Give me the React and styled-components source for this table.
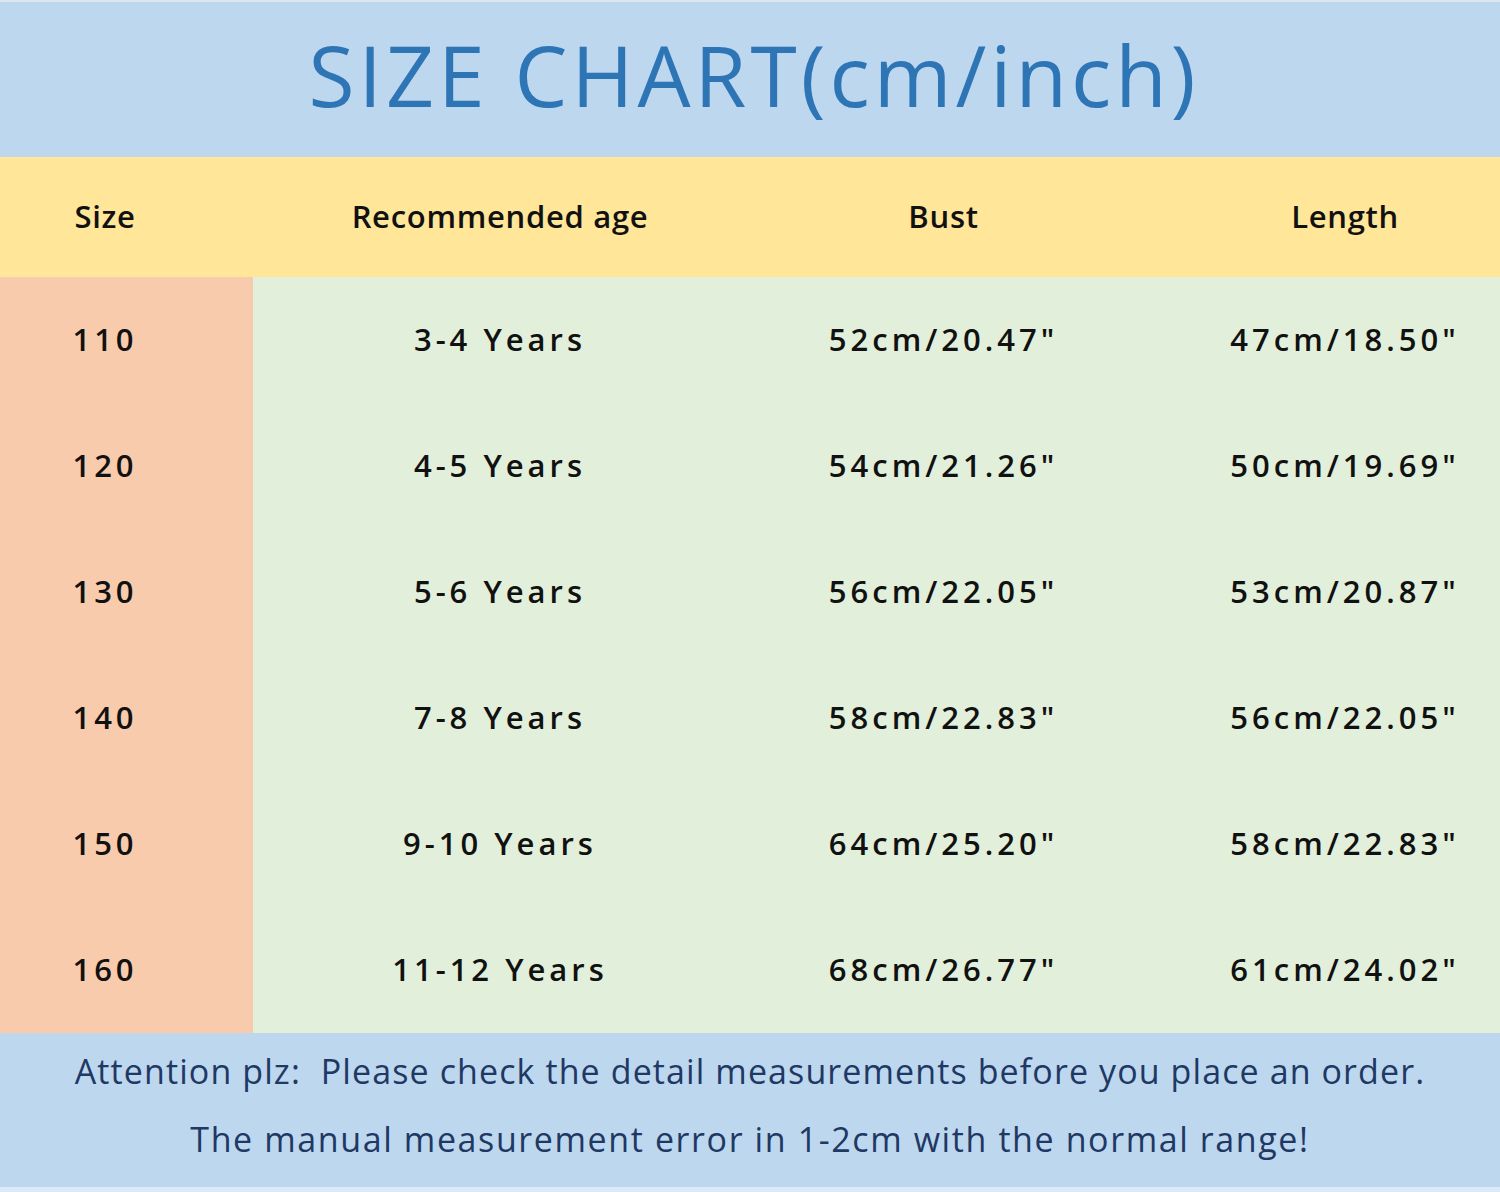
import React from 'react';
import styled, { createGlobalStyle } from 'styled-components';

/* Styling */
const GlobalStyle = createGlobalStyle`
  html, body {
    margin: 0;
    padding: 0;
    background: #dfe7ef;
  }
  body {
    font-family: "Open Sans", "DejaVu Sans", sans-serif;
  }
`;

const Sheet = styled.div`
  width: 1500px;
  height: 1192px;
  display: flex;
  flex-direction: column;
  border-top: 2px solid #dde5ee;
  border-bottom: 5px solid #dce9f6;
  box-sizing: border-box;
  overflow: hidden;
`;

const TitleBand = styled.div`
  height: 155px;
  background-color: #bdd7ee;
  display: flex;
  align-items: center;
  justify-content: center;
  box-sizing: border-box;
  padding-bottom: 10px;
  padding-left: 8px;
`;

const Title = styled.h1`
  margin: 0;
  font-family: "Open Sans", sans-serif;
  font-weight: 400;
  font-size: 84px;
  letter-spacing: 4px;
  color: #2e75b6;
  line-height: 1;
`;

const Grid = styled.div`
  display: grid;
  grid-template-columns: 253px 494px 393px 360px;
  grid-template-rows: 120px repeat(6, 126px);
`;

const Cell = styled.div`
  display: flex;
  align-items: center;
  justify-content: center;
  box-sizing: border-box;
  padding-left: ${(p) => p.$padLeft || 0}px;
  padding-right: ${(p) => p.$padRight || 0}px;
  padding-bottom: 3px;
  background-color: ${(p) => p.$bg};
  color: #111111;
  font-family: "Open Sans", sans-serif;
  font-weight: 600;
  font-size: 31px;
  letter-spacing: ${(p) => (p.$head ? 0.7 : 4)}px;
  white-space: nowrap;
`;

const Footer = styled.div`
  height: 154px;
  background-color: #bdd7ee;
  box-sizing: border-box;
  padding-top: 4px;
  text-align: center;
`;

const Note = styled.p`
  margin: 0;
  line-height: 68px;
  font-family: "Open Sans", sans-serif;
  font-size: 34px;
  letter-spacing: ${(p) => p.$spacing}px;
  color: #1f3864;
  white-space: pre;
`;

const columns = [
  { key: 'size', label: 'Size', padLeft: 0, padRight: 43 },
  { key: 'age', label: 'Recommended age', padLeft: 0, padRight: 0 },
  { key: 'bust', label: 'Bust', padLeft: 0, padRight: 0 },
  { key: 'length', label: 'Length', padLeft: 50, padRight: 0 }
];

const rows = [
  { size: '110', age: '3-4 Years', bust: '52cm/20.47"', length: '47cm/18.50"' },
  { size: '120', age: '4-5 Years', bust: '54cm/21.26"', length: '50cm/19.69"' },
  { size: '130', age: '5-6 Years', bust: '56cm/22.05"', length: '53cm/20.87"' },
  { size: '140', age: '7-8 Years', bust: '58cm/22.83"', length: '56cm/22.05"' },
  { size: '150', age: '9-10 Years', bust: '64cm/25.20"', length: '58cm/22.83"' },
  { size: '160', age: '11-12 Years', bust: '68cm/26.77"', length: '61cm/24.02"' }
];

const App = () => (
  <>
    <GlobalStyle />
    <Sheet>
      <TitleBand>
        <Title>SIZE CHART(cm/inch)</Title>
      </TitleBand>
      <Grid>
        {columns.map((col) => (
          <Cell
            key={col.key}
            $head
            $bg="#ffe699"
            $padLeft={col.padLeft}
            $padRight={col.padRight}
          >
            {col.label}
          </Cell>
        ))}
        {rows.map((row) =>
          columns.map((col, i) => (
            <Cell
              key={row.size + col.key}
              $bg={i === 0 ? '#f8cbad' : '#e2efda'}
              $padLeft={col.padLeft}
              $padRight={col.padRight}
            >
              {row[col.key]}
            </Cell>
          ))
        )}
      </Grid>
      <Footer>
        <Note $spacing={1.1}>
          {'Attention plz:  Please check the detail measurements before you place an order.'}
        </Note>
        <Note $spacing={1.6}>The manual measurement error in 1-2cm with the normal range!</Note>
      </Footer>
    </Sheet>
  </>
);

export default App;
